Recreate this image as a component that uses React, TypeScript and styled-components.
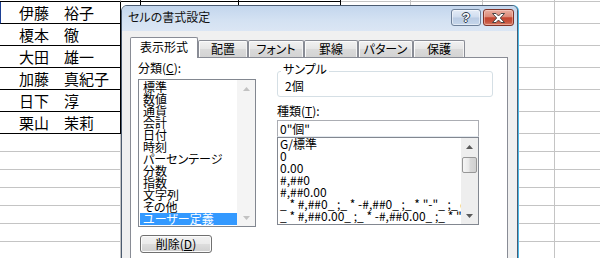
import React from "react";
import styled, { createGlobalStyle } from "styled-components";

const GlobalStyle = createGlobalStyle`
  html, body { margin: 0; padding: 0; background: #fff; overflow: hidden; }
  body { width: 600px; height: 258px; font-family: "Noto Sans CJK JP", "Noto Sans", sans-serif; }
`;

const INK = "#000";
const GRID = "#c4c4c4";

const Screen = styled.div`
  position: relative;
  width: 600px;
  height: 258px;
  overflow: hidden;
  background: #fff;
`;

const Sheet = styled.div`
  display: grid;
  grid-template-columns: 121px 18px 100px 102px 70px 72px 72px 72px;
  grid-template-rows: 2px repeat(6, 22px) repeat(7, 18px);
`;

const Cell = styled.div<{ $right: string; $bottom: string; $lead?: boolean }>`
  box-sizing: border-box;
  border-right: 1px solid ${(p) => p.$right};
  border-bottom: 1px solid ${(p) => p.$bottom};
  border-left: ${(p) => (p.$lead ? "1px solid #1c3f94" : "none")};
  padding-left: ${(p) => (p.$lead ? 18 : 19)}px;
  font-size: 15px;
  line-height: 21px;
  white-space: nowrap;
  color: #000;
`;

const Window = styled.div`
  position: absolute;
  left: 121px;
  top: 5px;
  width: 397px;
  height: 280px;
  box-sizing: border-box;
  border: 1px solid #4b5b70;
  border-radius: 6px 6px 0 0;
  background: #f0f0f0;
  box-shadow: 1px 0 0 #4ab9e8;
  display: flex;
  flex-direction: column;
  font-size: 12px;
  color: #000;
  font-feature-settings: "palt";
`;

const TitleBar = styled.div`
  height: 25px;
  box-sizing: border-box;
  display: flex;
  align-items: flex-start;
  justify-content: space-between;
  padding: 3px 3px 0 6px;
  background: linear-gradient(#c3d6ed, #d3e1f2 55%, #dbe6f4);
  border-radius: 5px 5px 0 0;
`;

const Title = styled.div`
  line-height: 16px;
  color: #111;
`;

const Caption = styled.div`
  display: flex;
  gap: 2px;
`;

const CaptionButton = styled.div`
  box-sizing: border-box;
  width: 30px;
  height: 17px;
  border-radius: 3px;
  display: flex;
  align-items: center;
  justify-content: center;
`;

const HelpButton = styled(CaptionButton)`
  border: 1px solid #6d8099;
  background: linear-gradient(#e4ecf7, #cfdcee 48%, #b9cbe3 52%, #c6d6eb);
  box-shadow: inset 0 0 0 1px rgba(255, 255, 255, 0.5);
  font-family: "Liberation Sans", Arial, sans-serif;
  font-weight: bold;
  font-size: 13px;
  line-height: 13px;
  color: #fff;
  text-shadow: 1px 0 0 #2e3b4d, -1px 0 0 #2e3b4d, 0 1px 0 #2e3b4d, 0 -1px 0 #2e3b4d;
`;

const CloseButton = styled(CaptionButton)`
  width: 31px;
  border: 1px solid #7f3329;
  background: linear-gradient(#eab0a2, #dc8a78 45%, #c4452f 52%, #c65440 80%, #d88068);
  box-shadow: inset 0 0 0 1px rgba(255, 220, 210, 0.45);
`;

const Body = styled.div`
  flex: 1;
  display: flex;
  flex-direction: column;
  padding: 6px 9px 0 8px;
`;

const TabStrip = styled.div`
  height: 20px;
  display: flex;
  align-items: flex-end;
  position: relative;
  z-index: 1;
`;

const Tab = styled.div<{ $w: number; $active?: boolean }>`
  box-sizing: border-box;
  width: ${(p) => p.$w}px;
  height: ${(p) => (p.$active ? 21 : 17)}px;
  margin-bottom: ${(p) => (p.$active ? -1 : 0)}px;
  border: 1px solid #898c95;
  border-bottom: none;
  border-radius: 2px 2px 0 0;
  background: ${(p) =>
    p.$active ? "#fff" : "linear-gradient(#f2f2f2, #e6e6e6 48%, #dadada 52%, #d3d3d3)"};
  box-shadow: ${(p) => (p.$active ? "none" : "inset 1px 1px 0 #fbfbfb, inset -1px 0 0 #f4f4f4")};
  display: flex;
  align-items: center;
  justify-content: center;
  line-height: 14px;
  padding-bottom: ${(p) => (p.$active ? 2 : 0)}px;
`;

const Panel = styled.div`
  flex: 1;
  border: 1px solid #898c95;
  background: #fff;
  padding: 3px 0 0 7px;
  display: flex;
  align-items: flex-start;
  gap: 21px;
`;

const Column = styled.div<{ $w: number }>`
  width: ${(p) => p.$w}px;
  display: flex;
  flex-direction: column;
`;

const FieldLabel = styled.div<{ $gap?: number }>`
  line-height: 14px;
  margin-top: ${(p) => p.$gap ?? 0}px;
  white-space: nowrap;
`;

const U = styled.span`
  text-decoration: underline;
  text-underline-offset: 1px;
`;

const ListBox = styled.div<{ $w?: number; $h: number; $gap: number }>`
  box-sizing: border-box;
  width: ${(p) => (p.$w ? `${p.$w}px` : "auto")};
  height: ${(p) => p.$h}px;
  margin-top: ${(p) => p.$gap}px;
  border: 1px solid #828790;
  background: #fff;
  display: flex;
  overflow: hidden;
`;

const Items = styled.div<{ $inset: number }>`
  flex: 1;
  min-width: 0;
  padding: ${(p) => p.$inset}px 0 0 ${(p) => p.$inset}px;
  overflow: hidden;
`;

const Item = styled.div<{ $selected?: boolean; $indent: number }>`
  height: 12px;
  line-height: 12px;
  padding-left: ${(p) => p.$indent}px;
  white-space: nowrap;
  background: ${(p) => (p.$selected ? "#3399ff" : "transparent")};
  color: ${(p) => (p.$selected ? "#fff" : "#000")};
`;

const ScrollBar = styled.div<{ $w: number; $disabled?: boolean }>`
  width: ${(p) => p.$w}px;
  flex: none;
  display: flex;
  flex-direction: column;
  background: ${(p) => (p.$disabled ? "#f4f4f4" : "#eeeeee")};
`;

const ArrowCell = styled.div`
  height: 17px;
  flex: none;
  display: flex;
  align-items: center;
  justify-content: center;
`;

const Track = styled.div`
  flex: 1;
  padding: 2px 1px 0 1px;
`;

const Thumb = styled.div`
  box-sizing: border-box;
  height: 16px;
  border: 1px solid #979797;
  border-radius: 2px;
  background: linear-gradient(to right, #f6f6f6, #e8e8e8 48%, #d9d9d9 52%, #d0d0d0);
`;

const PushButton = styled.div`
  box-sizing: border-box;
  width: 72px;
  height: 18px;
  margin: 8px 0 0 2px;
  border: 1px solid #707070;
  border-radius: 3px;
  background: linear-gradient(#f2f2f2, #ebebeb 48%, #dddddd 52%, #cfcfcf);
  box-shadow: inset 0 0 0 1px #fbfbfb;
  display: flex;
  align-items: center;
  justify-content: center;
  line-height: 14px;
`;

const Group = styled.div`
  position: relative;
  box-sizing: border-box;
  height: 26px;
  margin-top: 10px;
  border: 1px solid #d5dfe5;
  border-radius: 3px;
  padding: 6px 0 0 7px;
`;

const Legend = styled.span`
  position: absolute;
  top: -10px;
  left: 3px;
  padding: 0 2px;
  line-height: 14px;
  background: #fff;
`;

const SampleText = styled.div`
  line-height: 16px;
`;

const TextBox = styled.div`
  box-sizing: border-box;
  width: 202px;
  height: 17px;
  margin-top: 2px;
  border: 1px solid #abadb3;
  border-bottom-color: #e3e9ef;
  padding-left: 2px;
  line-height: 15px;
  white-space: nowrap;
`;

const Arrow = ({ up, color }: { up?: boolean; color: string }) => (
  <svg width="7" height="4" viewBox="0 0 7 4">
    <polygon points={up ? "3.5,0 7,4 0,4" : "0,0 7,0 3.5,4"} fill={color} />
  </svg>
);

const NAMES = ["伊藤　裕子", "榎本　徹", "大田　雄一", "加藤　真紀子", "日下　淳", "栗山　茉莉"];

const TABS = [
  { label: "表示形式", w: 68, active: true },
  { label: "配置", w: 50 },
  { label: "フォント", w: 56 },
  { label: "罫線", w: 54 },
  { label: "パターン", w: 55 },
  { label: "保護", w: 52 },
];

const CATEGORIES = [
  "標準",
  "数値",
  "通貨",
  "会計",
  "日付",
  "時刻",
  "パーセンテージ",
  "分数",
  "指数",
  "文字列",
  "その他",
  "ユーザー定義",
];

const FORMATS = [
  "G/標準",
  "0",
  "0.00",
  "#,##0",
  "#,##0.00",
  '_ * #,##0_ ;_ * -#,##0_ ;_ * "-"_ ;_ @_ ',
  '_ * #,##0.00_ ;_ * -#,##0.00_ ;_ * "-"??_ ;_ @_ ',
];

const ROW_COUNT = 14;
const COL_COUNT = 8;

function sheetCells() {
  const out: React.ReactNode[] = [];
  for (let r = 0; r < ROW_COUNT; r++) {
    for (let c = 0; c < COL_COUNT; c++) {
      const isName = c === 0 && r >= 1 && r <= 6;
      const right = isName || (c >= 1 && c <= 3 && r <= 1) ? INK : GRID;
      const bottom = (c === 0 && r <= 6) || (r === 0 && c <= 3) ? INK : GRID;
      out.push(
        <Cell key={`${r}-${c}`} $right={right} $bottom={bottom} $lead={c === 0 && r === 1}>
          {isName ? NAMES[r - 1] : null}
        </Cell>
      );
    }
  }
  return out;
}

export default function App() {
  return (
    <>
      <GlobalStyle />
      <Screen>
        <Sheet>{sheetCells()}</Sheet>
        <Window>
          <TitleBar>
            <Title>セルの書式設定</Title>
            <Caption>
              <HelpButton>?</HelpButton>
              <CloseButton>
                <svg width="13" height="10" viewBox="0 0 13 10">
                  <polygon
                    points="0.5,0.5 4,0.5 6.5,3 9,0.5 12.5,0.5 8.3,5 12.5,9.5 9,9.5 6.5,7 4,9.5 0.5,9.5 4.7,5"
                    fill="#fff"
                    stroke="#3a3a3a"
                    strokeWidth="0.9"
                    strokeLinejoin="round"
                  />
                </svg>
              </CloseButton>
            </Caption>
          </TitleBar>
          <Body>
            <TabStrip>
              {TABS.map((t) => (
                <Tab key={t.label} $w={t.w} $active={t.active}>
                  {t.label}
                </Tab>
              ))}
            </TabStrip>
            <Panel>
              <Column $w={118}>
                <FieldLabel>
                  分類(<U>C</U>):
                </FieldLabel>
                <ListBox $h={148} $gap={4}>
                  <Items $inset={1}>
                    {CATEGORIES.map((c, i) => (
                      <Item key={c} $indent={3} $selected={i === CATEGORIES.length - 1}>
                        {c}
                      </Item>
                    ))}
                  </Items>
                  <ScrollBar $w={18} $disabled>
                    <ArrowCell>
                      <Arrow up color="#c2c2c2" />
                    </ArrowCell>
                    <Track />
                    <ArrowCell>
                      <Arrow color="#c2c2c2" />
                    </ArrowCell>
                  </ScrollBar>
                </ListBox>
                <PushButton>
                  削除(<U>D</U>)
                </PushButton>
              </Column>
              <Column $w={216}>
                <Group>
                  <Legend>サンプル</Legend>
                  <SampleText>2個</SampleText>
                </Group>
                <FieldLabel $gap={7}>
                  種類(<U>T</U>):
                </FieldLabel>
                <TextBox>0"個"</TextBox>
                <ListBox $w={202} $h={88} $gap={0}>
                  <Items $inset={0}>
                    {FORMATS.map((f) => (
                      <Item key={f} $indent={2}>
                        {f}
                      </Item>
                    ))}
                  </Items>
                  <ScrollBar $w={17}>
                    <ArrowCell>
                      <Arrow up color="#5a5a5a" />
                    </ArrowCell>
                    <Track>
                      <Thumb />
                    </Track>
                    <ArrowCell>
                      <Arrow color="#5a5a5a" />
                    </ArrowCell>
                  </ScrollBar>
                </ListBox>
              </Column>
            </Panel>
          </Body>
        </Window>
      </Screen>
    </>
  );
}
